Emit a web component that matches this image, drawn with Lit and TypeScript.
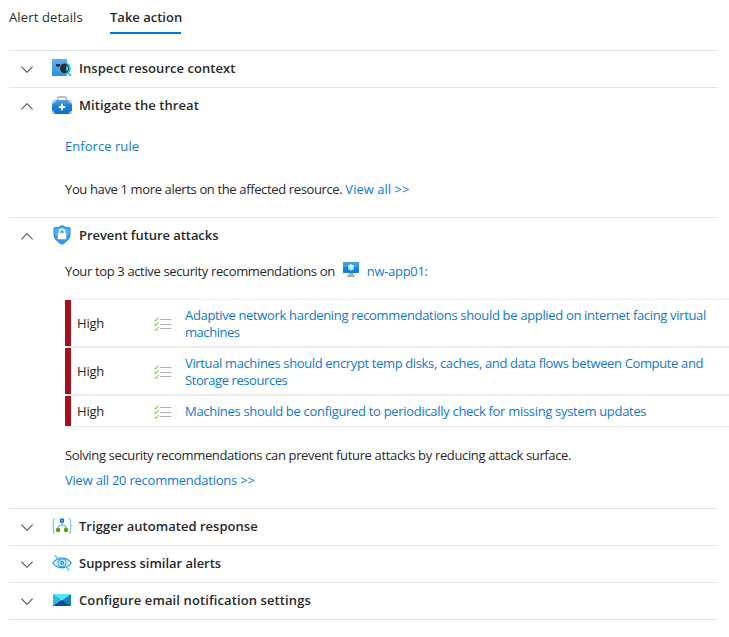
import { LitElement, html, css, svg, nothing } from "lit";
import { customElement, property } from "lit/decorators.js";
import { styleMap } from "lit/directives/style-map.js";

const icons = {
  inspect: svg`<svg width="20" height="20" viewBox="0 0 20 20">
    <defs><linearGradient id="a" x1="0" y1="0" x2="0" y2="1"><stop stop-color="#5ab4f6"/><stop offset="1" stop-color="#2a8fe4"/></linearGradient></defs>
    <path fill="url(#a)" d="M0 1h15v17H0z"/><path fill="#1b2a3a" d="M4 6h6v2.500H4z"/>
    <path d="M16.300 14.800l2.700 3.200" stroke="#32bedd" stroke-width="1.800"/>
    <circle cx="13" cy="10.500" r="5.900" fill="#32bedd"/><ellipse cx="12.400" cy="10.500" rx="4.400" ry="4.900" fill="#2d2d2f"/>
    <path d="M14.200 7.500c2.700 1 2.700 5 0 6z" fill="#32d4f5"/></svg>`,
  kit: svg`<svg width="20" height="18" viewBox="0 0 20 18">
    <defs><linearGradient id="b" x1="0" y1="0" x2="0" y2="1"><stop stop-color="#4fa3ea"/><stop offset=".45" stop-color="#1d7fd8"/><stop offset="1" stop-color="#0a70d2"/></linearGradient></defs>
    <path d="M5.700 5V2.200Q5.700 1 6.900 1h6.200q1.200 0 1.200 1.200V5" fill="none" stroke="#b9bfc6" stroke-width="1.800"/>
    <path d="M2.300 4h15.400q1.200 0 1.500 1.300L20 9v7.700q0 1.300-1.300 1.300H1.300Q0 18 0 16.700V9L.8 5.300Q1.100 4 2.300 4z" fill="url(#b)"/>
    <path fill="#c9cdd2" d="M.3 7.500L.8 5.300Q1.100 4 2.300 4H4Q3.500 7 .3 7.500zM19.700 7.500l-.5-2.200Q18.900 4 17.700 4H16q.5 3 3.700 3.500zM0 14.500q2.600.5 3 3.500H1.300Q0 18 0 16.700zM20 14.500q-2.600.5-3 3.500h1.700q1.300 0 1.300-1.300z"/>
    <path fill="#fff" d="M9 7.800h2v2.200h2.200v2H11v2.200H9V12H6.800v-2H9z"/></svg>`,
  shield: svg`<svg width="18" height="20" viewBox="0 0 18 20">
    <path fill="#1d83dc" d="M9 0c3 2.200 5 2.200 8.500 2.400V9c0 6-5.500 8.600-8.500 11C6 17.600.5 15 .5 9V2.400C4 2.200 6 2.200 9 0z"/>
    <path fill="#55b2f6" d="M9 1.200c3 2 4.800 2.100 7.500 2.300V9c0 5-4.500 7.500-7.500 9.700C6 16.500 1.500 14 1.500 9V3.500C4.200 3.300 6 3.200 9 1.200z"/>
    <path fill="#3498ec" d="M9 10h7.400c-.4 4.300-4.500 6.600-7.400 8.700C6 16.500 2 14.200 1.600 10z"/>
    <path d="M6.500 9V6.700a2.500 2.500 0 0 1 5 0V9" fill="none" stroke="#fff" stroke-width="1.400"/><rect x="4.700" y="8.300" width="8.600" height="6" rx=".7" fill="#fff"/></svg>`,
  vm: svg`<svg width="16" height="15" viewBox="0 0 16 15">
    <path fill="#a9adb2" d="M6 10h4l.6 3.500H12V15H4v-1.500h1.400z"/><rect width="16" height="11" rx=".6" fill="#1b80dc"/><path fill="#3f9ceb" d="M0 .6Q0 0 .6 0h14.800q.6 0 .6.600V5H0z"/>
    <path fill="#9cebff" d="M8 2.300l2.900 1.600v3.300L8 8.800 5.100 7.200V3.900z"/><path fill="#fff" d="M8 2.300l2.900 1.600L8 5.500 5.100 3.900z"/></svg>`,
  flow: svg`<svg width="20" height="16" viewBox="0 0 20 16">
    <path d="M3 .6Q1.500.6 1.500 2v4q0 1.700-1.200 2 1.200.3 1.200 2v4q0 1.400 1.500 1.400M17 .6q1.500 0 1.500 1.400v4q0 1.700 1.200 2-1.200.3-1.200 2v4q0 1.400-1.500 1.400" fill="none" stroke="#7cc8ec" stroke-width="1.200"/>
    <path d="M10 4v3M6.200 11V9.300q0-1 1.200-1.500L10 6.700l2.600 1.100q1.200.5 1.200 1.500V11" fill="none" stroke="#5fb2e3" stroke-width="1.200"/>
    <rect x="8.600" y="1.200" width="2.800" height="2.800" fill="#9ed2f7" stroke="#0f76d1" stroke-width="1.400"/><circle cx="6" cy="12" r="2.200" fill="#57a300"/><circle cx="14" cy="12" r="2.200" fill="#57a300"/></svg>`,
  eye: svg`<svg width="20" height="16" viewBox="0 0 20 16">
    <path d="M.8 8C5.200 1.400 14.800 1.400 19.200 8 14.800 14.300 5.200 14.300.8 8z" fill="#eef8ff" stroke="#2f93e8" stroke-width="1.300"/>
    <circle cx="10" cy="7.800" r="4" fill="#fff" stroke="#399be9" stroke-width="1.200"/><circle cx="10" cy="7.800" r="2.100" fill="#2389e3"/>
    <path d="M2.800.5l14.500 15" stroke="#42d0f4" stroke-width="1.500"/></svg>`,
  mail: svg`<svg width="18" height="12" viewBox="0 0 18 12">
    <path fill="#2fb3dc" d="M0 0h18v12H0z"/><path fill="#1684b8" d="M18 0v12L9 6z"/><path fill="#35b9df" d="M0 0v12l9-6z"/><path fill="#50e6ff" d="M0 0h18L9 6.600z"/><path fill="#0b4f9c" d="M0 12l7.500-5.300Q9 5.900 10.500 6.700L18 12z"/></svg>`,
};

const checklist = svg`<svg width="18" height="15" viewBox="0 0 18 15">
  <path d="M6 2.500h11.500M6 7.500h11.500M6 11.500h11.500" stroke="#b3b3b3" stroke-width="1.100"/>
  <path d="M.4 2.500l1.400 1.300L4.400.7M.4 7.300l1.400 1.300 2.600-3.100M.4 12l1.400 1.300 2.600-3.100" fill="none" stroke="#92d867" stroke-width="1.300"/></svg>`;

/** A run of text with its own tracking, in pixels. */
const run = (text: string, tracking: number) =>
  html`<span style=${styleMap({ letterSpacing: `${tracking}px` })}>${text}</span>`;

@customElement("accordion-section")
class AccordionSection extends LitElement {
  @property() heading = "";
  @property({ type: Number }) tracking = 0;
  @property() icon: keyof typeof icons = "inspect";
  @property({ type: Boolean }) open = false;
  static styles = css`
    :host { display: block; border-top: 1px solid #e4e4e4; }
    .head { box-sizing: border-box; height: 36px; padding-bottom: 2px; display: flex; align-items: center; }
    .chevron { width: 12px; margin: 2px 0 0 12px; display: block; }
    .icon { width: 20px; margin-left: 19px; display: flex; justify-content: center; }
    .title { margin-left: 7px; font-weight: 600; white-space: nowrap; }
    svg { display: block; }
  `;
  render() {
    return html`<div class="head">
        <svg class="chevron" width="12" height="7" viewBox="0 0 12 7"><path d=${this.open ? "M.4 6.300L6 .7l5.600 5.600" : "M.4.7L6 6.300 11.600.7"} fill="none" stroke="#505050" stroke-width="1.100"/></svg>
        <span class="icon">${icons[this.icon]}</span><span class="title">${run(this.heading, this.tracking)}</span>
      </div>${this.open ? html`<slot></slot>` : nothing}`;
  }
}

const recommendations: { text: string; tracking: number }[][] = [
  [
    { text: "Adaptive network hardening recommendations should be applied on internet facing virtual", tracking: -0.332 },
    { text: "machines", tracking: -0.45 },
  ],
  [
    { text: "Virtual machines should encrypt temp disks, caches, and data flows between Compute and", tracking: -0.36 },
    { text: "Storage resources", tracking: -0.42 },
  ],
  [{ text: "Machines should be configured to periodically check for missing system updates", tracking: -0.31 }],
];

@customElement("app-root")
class AppRoot extends LitElement {
  static styles = css`
    :host { display: block; height: 637px; overflow: hidden; background: #fff; color: #292827;
      font: 13px/17px "Open Sans", "Noto Sans", sans-serif; letter-spacing: -0.2px; }
    .tabs { display: flex; gap: 27px; padding: 9px 0 0 9px; height: 41px; }
    .tab { height: 23px; width: 74px; white-space: nowrap; }
    .active { width: 71px; font-weight: 600; border-bottom: 2px solid #0078d4; }
    .sections { width: 708px; margin-left: 9px; border-bottom: 1px solid #e4e4e4; }
    .body { padding-left: 56px; white-space: nowrap; }
    .link { color: #0f78cf; }
    .mitigate { height: 93px; }
    .enforce { padding-top: 14px; }
    .more { padding-top: 26px; }
    .prevent { height: 254px; }
    .intro { display: flex; padding-top: 9px; height: 36px; }
    .vm { margin: -1px 8px 0 8px; }
    .table { width: 664px; border-top: 1px solid #eaeaea; border-bottom: 1px solid #eaeaea; }
    .row { box-sizing: border-box; display: flex; align-items: center; height: 46px; border-left: 6px solid #a80f1d; }
    .row.single { height: 30px; }
    .names { padding-top: 2px; }
    .single .names { padding-top: 0; }
    .rule { height: 2px; background: #eaeaea; }
    .severity { width: 77px; padding-left: 6px; }
    .check { width: 31px; padding-top: 3px; }
    .solving { padding-top: 20px; }
    .all { padding-top: 8px; }
    svg { display: block; }
  `;
  render() {
    return html`
      <div class="tabs"><div class="tab">${run("Alert details", 0.14)}</div><div class="tab active">${run("Take action", 0)}</div></div>
      <div class="sections">
        <accordion-section heading="Inspect resource context" tracking="0.05" icon="inspect"></accordion-section>
        <accordion-section heading="Mitigate the threat" tracking="0.07" icon="kit" open>
          <div class="body mitigate">
            <div class="enforce link">${run("Enforce rule", 0.05)}</div>
            <div class="more">${run("You have 1 more alerts on the affected resource. ", -0.365)}<span class="link">${run("View all >>", 0.03)}</span></div>
          </div>
        </accordion-section>
        <accordion-section heading="Prevent future attacks" tracking="-0.06" icon="shield" open>
          <div class="body prevent">
            <div class="intro">${run("Your top 3 active security recommendations on", -0.36)}<span class="vm">${icons.vm}</span><span class="link">${run("nw-app01:", -0.3)}</span></div>
            <div class="table">${recommendations.map((lines, i) => html`
              ${i ? html`<div class="rule"></div>` : nothing}
              <div class="row ${lines.length === 1 ? "single" : ""}"><span class="severity">High</span><span class="check">${checklist}</span>
                <div class="link names">${lines.map((line) => html`<div>${run(line.text, line.tracking)}</div>`)}</div></div>`)}
            </div>
            <div class="solving">${run("Solving security recommendations can prevent future attacks by reducing attack surface.", -0.35)}</div>
            <div class="all link">${run("View all 20 recommendations >>", -0.23)}</div>
          </div>
        </accordion-section>
        <accordion-section heading="Trigger automated response" tracking="0.03" icon="flow"></accordion-section>
        <accordion-section heading="Suppress similar alerts" tracking="-0.02" icon="eye"></accordion-section>
        <accordion-section heading="Configure email notification settings" tracking="0.11" icon="mail"></accordion-section>
      </div>`;
  }
}
